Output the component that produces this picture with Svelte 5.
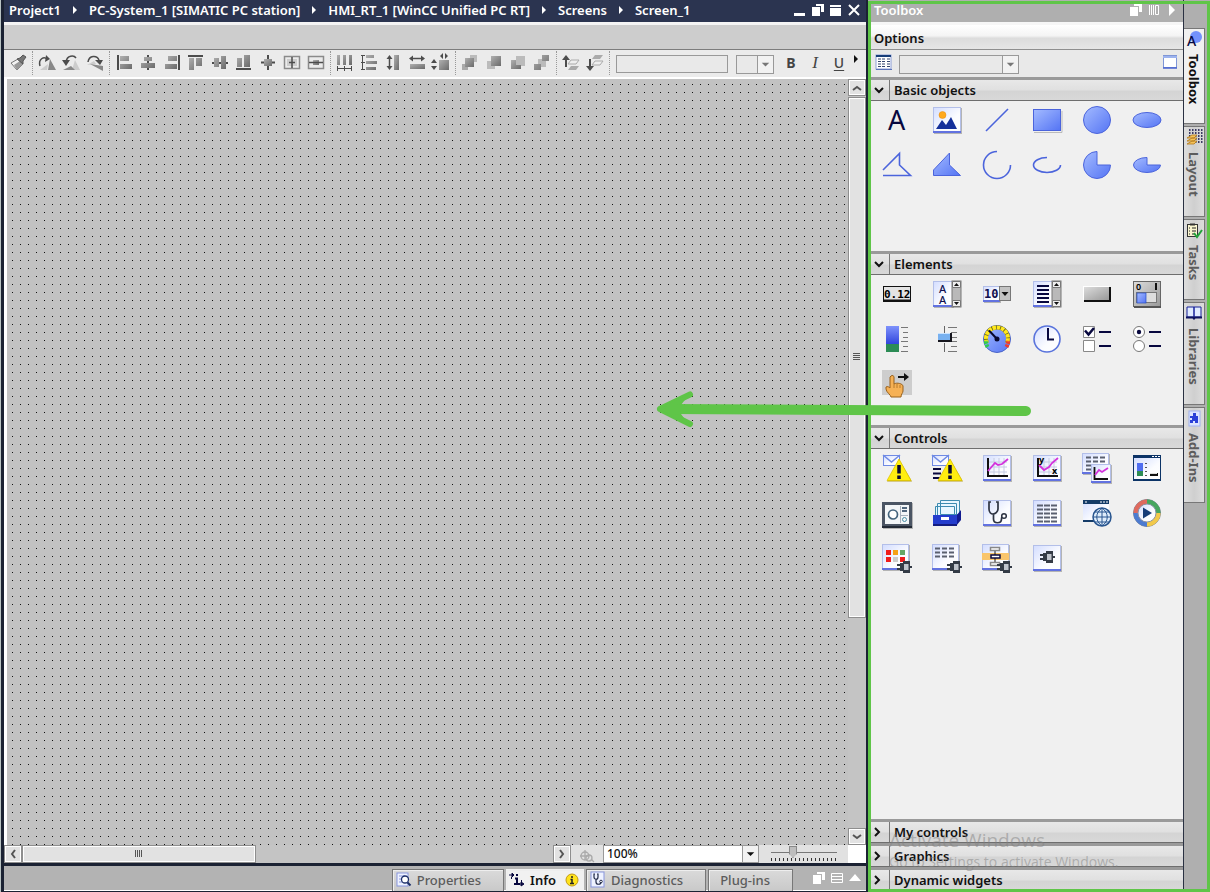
<script>
  const sheet = (x, y, w, h) =>
    `<rect x="${x + 1}" y="${y + 1}" width="${w}" height="${h}" fill="#b4b4b4"/><rect x="${x + 0.5}" y="${y + 0.5}" width="${w - 1}" height="${h - 1}" fill="url(#paper)" stroke="#b3bfe9"/><rect x="${x}" y="${y + h - 2}" width="${w}" height="2" fill="#6272e0"/>`;
  const plug = (x, y) =>
    `<g transform="translate(${x} ${y})"><path d="M0 4h4M0 8h4M12 6h3" stroke="#343b46" stroke-width="2"/><path d="M3 2h3V0h7v12H6v-2H3z" fill="#343b46"/><rect x="7" y="3" width="4.500" height="6" fill="#bfc4cc"/></g>`;
  const grid = (x, y) =>
    `<path d="M${x} ${y}h18M${x} ${y + 5}h18M${x} ${y + 10}h18M${x + 5} ${y - 4}v18M${x + 10} ${y - 4}v18M${x + 15} ${y - 4}v18" stroke="#c5cbe2" fill="none"/>`;
  const dashes = (x, y, rows, w = 5, step = 7) => {
    let d = '';
    for (let r = 0; r < rows; r++) for (let c = 0; c < 3; c++) d += `M${x + c * step} ${y + r * 4 + 0.5}h${w}`;
    return `<path d="${d}" stroke="#5a6070" stroke-width="2" fill="none"/>`;
  };
  const spin = `<rect x="20" y="2" width="9" height="26" fill="#b9b9b9" stroke="#777" stroke-width="1"/><path d="M20.500 2.500h8v6h-8zM20.500 21.500h8v6h-8z" fill="#eee" stroke="#777"/><path d="M22 7h5l-2.500-3zM22 23h5l-2.500 3z" fill="#111"/>`;
  const warn = (x) => `<path d="M${x} 6L${x + 13} 28.500H${x - 12}z" fill="#b8a020"/><path d="M${x} 6L${x + 12} 27.500H${x - 12}z" fill="#ffee10" stroke="#e0c400" stroke-width=".7"/><path d="M${x} 12v8.500M${x} 22.500v3.500" stroke="#0a0a30" stroke-width="3.500"/>`;
  const mail = (x) => `<rect x="${x + 0.5}" y="2.500" width="16" height="10" fill="url(#paper)" stroke="#6f8ae4"/><path d="M${x} 2l8.500 7 8.500-7" fill="none" stroke="#6f8ae4" stroke-width="1.500"/>`;
  const blueLine = 'fill="none" stroke="#4b64dc" stroke-width="1.600"';
  const blueFill = 'fill="url(#blue)" stroke="#4b64dc"';

  const basic = [
    ['Text', `<text x="6" y="25" font-family="Noto Sans, sans-serif" font-size="27" font-weight="400" fill="#08083f">A</text>`],
    ['Graphic view', `${sheet(1, 2, 28, 26)}<circle cx="10.500" cy="10" r="3.500" fill="#ffa91e" stroke="#e88b08" stroke-width=".5"/><path d="M4 24l6-9 4 5 5-8 6 12z" fill="#15309a"/>`],
    ['Line', `<path d="M4 26L26 4" ${blueLine}/>`],
    ['Rectangle', `<path d="M2 27.500h28V6" stroke="#bbb" fill="none"/><rect x="1.500" y="4.500" width="27" height="21" ${blueFill}/>`],
    ['Circle', `<circle cx="15" cy="15" r="13.500" ${blueFill}/>`],
    ['Ellipse', `<ellipse cx="15" cy="15" rx="14" ry="7.500" ${blueFill}/>`],
    ['Polyline', `<path d="M1 20L17.500 3.500V15L28.500 25.500H1" ${blueLine}/>`],
    ['Polygon', `<path d="M1.500 20L17.500 3V15L28.500 25.500H1.500z" ${blueFill}/>`],
    ['Circular arc', `<path d="M15 1.500A13.500 13.500 0 1 0 28.500 15" ${blueLine}/>`],
    ['Elliptical arc', `<path d="M15 7.500A13.500 7.500 0 1 0 28.500 15" ${blueLine}/>`],
    ['Circle segment', `<path d="M15 1.500A13.500 13.500 0 1 0 28.500 15H15z" ${blueFill}/>`],
    ['Ellipse segment', `<path d="M15 7.500A13.500 7.500 0 1 0 28.500 15H15z" ${blueFill}/>`]
  ];

  const yellowTicks = 'M5 19A11 11 0 1 1 25 19';
  const elements = [
    ['IO field', `<rect x="1" y="7" width="28" height="16" fill="#111"/><rect x="2" y="8" width="26" height="12.500" fill="#e3e3e3"/><text x="2" y="18.500" font-family="DejaVu Sans Mono, monospace" font-weight="700" font-size="11">0.12</text>`],
    ['Symbolic list', `${sheet(1, 2, 20, 26)}<g font-family="Noto Sans, sans-serif" font-size="11" font-weight="500" fill="#101050"><text x="7" y="14">A</text><text x="7" y="25">A</text></g>${spin}`],
    ['Symbolic IO field', `${sheet(1, 7, 17, 16)}<text x="2" y="19" font-family="DejaVu Sans Mono, monospace" font-weight="700" font-size="12" fill="#101050">10</text><rect x="17.500" y="7.500" width="11" height="14" fill="#c3c3c3" stroke="#777"/><path d="M19.500 13h7L23 17z" fill="#111"/>`],
    ['List box', `${sheet(1, 2, 20, 26)}<path d="M5 7h12M5 11h12M5 15h12M5 19h12M5 23h12" stroke="#08083f" stroke-width="2"/>${spin}`],
    ['Button', `<rect x="2" y="8" width="27" height="15" fill="#111"/><rect x="1" y="7" width="26" height="14" fill="#fff"/><rect x="2" y="8" width="25" height="13" fill="url(#steel)"/>`],
    ['Switch', `<rect x="1.500" y="2.500" width="27" height="25" fill="url(#steel)" stroke="#666"/><path d="M2 28h27" stroke="#555" stroke-width="2"/><text x="4" y="11" font-family="Noto Sans, sans-serif" font-size="9" font-weight="600">0</text><path d="M24 4v7" stroke="#111" stroke-width="2"/><rect x="4.500" y="13.500" width="20" height="10" fill="#ddd" stroke="#777"/><rect x="5" y="14" width="9" height="10" fill="url(#blue)" stroke="#234bc0" stroke-width=".7"/>`],
    ['Bar', `<rect x="4" y="2" width="13" height="18" fill="url(#deep)"/><rect x="4" y="20" width="13" height="8" fill="#2c8c55"/><path d="M19 3.500h7M21 8.500h5M21 13.500h5M19 17.500h7M21 22.500h5M19 27.500h7" stroke="#777"/>`],
    ['Slider', `<path d="M12.500 2v11M12.500 19v9" stroke="#666"/><path d="M16 3.500h9M19 8.500h6M19 13.500h6M16 17.500h9M19 22.500h6M16 27.500h9" stroke="#777"/><rect x="6" y="9" width="14" height="9" fill="#16161e"/><rect x="6" y="9" width="12" height="7" fill="#78b1f0"/><path d="M6 9.500h12" stroke="#cbe4ff"/>`],
    ['Gauge', `<circle cx="15" cy="15" r="13.500" fill="url(#blue)" stroke="#4a64c8"/><path d="${yellowTicks}" fill="none" stroke="#66621c" stroke-width="4"/><path d="${yellowTicks}" fill="none" stroke="#ffe81c" stroke-width="4" stroke-dasharray="3.500 .8"/><path d="M5.500 23A12 12 0 0 1 4 16" fill="none" stroke="#2ecc50" stroke-width="4" stroke-dasharray="2.500 1"/><path d="M24.500 23A12 12 0 0 0 26 16" fill="none" stroke="#f03a2c" stroke-width="4" stroke-dasharray="2.500 1"/><path d="M7 6.500L15 15" stroke="#080830" stroke-width="2"/><circle cx="15" cy="15" r="2.500" fill="#080830"/>`],
    ['Clock', `<circle cx="15" cy="15" r="13" fill="url(#paper)" stroke="#5a74dc" stroke-width="1.600"/><path d="M16 4v11.500h6" fill="none" stroke="#08083f" stroke-width="2"/>`],
    ['Check box', `<path d="M1.500 2.500h11v11h-11zM1.500 16.500h11v11h-11z" fill="#fff" stroke="#888"/><path d="M3 6.500l3.500 4L12 4" fill="none" stroke="#08083f" stroke-width="2.500"/><path d="M17 8h12M17 22h12" stroke="#08083f" stroke-width="2"/>`],
    ['Radio button', `<g fill="#fff" stroke="#777"><circle cx="7" cy="8" r="5.500"/><circle cx="7" cy="22" r="5.500"/></g><circle cx="7" cy="8" r="2.200" fill="#08083f"/><path d="M17 8h12M17 22h12" stroke="#08083f" stroke-width="2"/>`],
    ['Touch area', `<path d="M0 1h30v25H0z" fill="#cdcdcd"/><path d="M9 7c1.500-1.300 3 0 3 1v7c3-2 9 0 9 2v5c0 2-2 3-2 6H9c0-2-5-5-5-8v-2c1.500-1 3 0 4 1V8z" fill="#f6b155" stroke="#99611c"/><path d="M12 15v4M15 15v4M18 16v3" stroke="#b77a2c" fill="none"/><path d="M16 8h8" stroke="#111" stroke-width="2"/><path d="M22 4l5 4-5 4z" fill="#111"/>`]
  ];

  const controls = [
    ['Alarm control', `${mail(1)}${warn(17)}`],
    ['Alarm line', `${mail(0)}<path d="M1 16h8M1 20.500h8M1 25h8" stroke="#08083f" stroke-width="2"/>${warn(18)}`],
    ['Trend control', `${sheet(1, 2, 28, 26)}${grid(7, 9)}<path d="M6 5v18H26" fill="none" stroke="#111" stroke-width="2"/><path d="M6 18l7-8 3 2 4-1 6-5" fill="none" stroke="#d432dc" stroke-width="1.800"/>`],
    ['Function trend', `${sheet(1, 2, 28, 26)}${grid(7, 9)}<path d="M6 5v18H26" fill="none" stroke="#111" stroke-width="2"/><path d="M7 12l5 5 5-3 3-4 6-5" fill="none" stroke="#d432dc" stroke-width="1.800"/><g font-family="Noto Sans, sans-serif" font-size="9" font-weight="700"><text x="7" y="10">y</text><text x="20" y="21">x</text></g>`],
    ['Trend companion', `${sheet(0, 0, 27, 21)}${dashes(4, 4, 4)}${sheet(9, 11, 20, 19)}<path d="M12.500 14v12H26" fill="none" stroke="#111" stroke-width="1.800"/><path d="M13 22l4-5 3 2 6-4" fill="none" stroke="#d432dc" stroke-width="1.800"/>`],
    ['Faceplate', `<rect x="1" y="2" width="28" height="26" fill="#0c3366"/><rect x="2" y="5" width="26" height="21" fill="url(#paper)"/><path d="M20 3.500h2M23 3.500h2M26 3.500h2" stroke="#fff"/><rect x="5" y="10" width="6" height="8" fill="#4f6df0"/><rect x="5" y="18" width="6" height="5" fill="#2c8c55"/><path d="M13 10.500h2M13 14.500h2M13 18.500h2M13 22.500h2" stroke="#555"/><rect x="18" y="20" width="8" height="3" fill="#111"/><path d="M18 20.500h7" stroke="#ddd"/>`],
    ['Screen window', `<rect x="1" y="5" width="30" height="26" fill="#b5b5b5"/><rect x="0" y="4" width="30" height="26" fill="#4b5564"/><path d="M0 29h30" stroke="#222a36" stroke-width="2"/><rect x="3" y="7" width="24" height="19" fill="#f3f6f8"/><circle cx="11" cy="16.500" r="4.500" fill="#fff" stroke="#44647d" stroke-width="1.700"/><path d="M18.500 8v17M19 17.500h7" stroke="#a7b0bb"/><path d="M20 10h5M20 13h5" stroke="#1c3956" stroke-width="1.500"/><circle cx="22.500" cy="21.500" r="2" fill="none" stroke="#4a8ea5"/>`],
    ['Parameter set', `<g fill="#e7f7ff" stroke="#3c8bb0"><path d="M8.500 2.500h19v14h-19zM5.500 5.500h19v14h-19zM3.500 8.500h19v14h-19z"/></g><path d="M24 18l5-6v10l-5 6z" fill="#111b8f"/><rect x="1" y="17" width="24" height="11" fill="#243dcd"/><path d="M1 27h24" stroke="#131c80" stroke-width="2"/><path d="M9 20.500h8" stroke="#fff" stroke-width="3"/>`],
    ['System diagnostics', `${sheet(1, 2, 28, 26)}<path d="M9 4H7v7c0 3 2 5 4 5s5-2 5-5V4h-2M11.500 16v5c0 5 8 5 8 0 0-2 1-3 2-3" fill="none" stroke="#2e3443" stroke-width="1.700"/><circle cx="22" cy="18" r="2.300" fill="#fff" stroke="#2e3443" stroke-width="1.500"/>`],
    ['Process data', `${sheet(1, 2, 28, 26)}${dashes(5, 7, 5, 6, 7)}`],
    ['Browser', `<rect x="1" y="2" width="26" height="22" fill="url(#paper)"/><rect x="1" y="2" width="26" height="4" fill="#143b67"/><path d="M3 4h2M18 4h2M21 4h2M24 4h2" stroke="#fff"/><path d="M1 23h14" stroke="#143b67" stroke-width="2"/><circle cx="20" cy="19" r="9" fill="#dfedfb" stroke="#28558f" stroke-width="1.500"/><path d="M11 19h18M13 14h14M13 24h14M20 10v18M20 10c-7 5-7 13 0 18M20 10c7 5 7 13 0 18" fill="none" stroke="#28558f"/>`],
    ['Media player', `<circle cx="15" cy="15" r="13.500" fill="#b9bfca" stroke="#7a8292"/><g fill="none" stroke-width="5"><path d="M4 15A11 11 0 0 1 15 4" stroke="#df6a5e"/><path d="M15 4A11 11 0 0 1 26 15" stroke="#46a75e"/><path d="M26 15A11 11 0 0 1 15 26" stroke="#f2c94a"/><path d="M15 26A11 11 0 0 1 4 15" stroke="#4c7bd0"/></g><circle cx="15" cy="15" r="9" fill="url(#paper)" stroke="#8b93a6"/><path d="M11 9.500l9 5.500-9 5.500z" fill="#173d78"/>`],
    ['Custom tiles', `${sheet(0, 1, 27, 26)}<path d="M4 7h5v5H4zM18 14h5v5h-5zM4 14h5v5H4z" fill="#f01c1c"/><path d="M11 7h5v5h-5z" fill="#f5a117"/><path d="M18 7h5v5h-5z" fill="#66a766"/><path d="M11 14h5v5h-5z" fill="#ccc"/>${plug(15, 18)}`],
    ['Custom table', `${sheet(0, 1, 27, 26)}${dashes(3, 5, 3)}${plug(15, 18)}`],
    ['Plant overview', `${sheet(0, 1, 27, 26)}<rect x="0" y="10" width="27" height="7" fill="#f9c56c"/><path d="M13 7v14" stroke="#111"/><path d="M8.500 4.500h9v3h-9zM8.500 19.500h9v3h-9z" fill="#fff" stroke="#888" stroke-width="1.500"/><rect x="9" y="12" width="9" height="3" fill="#fff" stroke="#08083f" stroke-width="1.500"/>${plug(15, 18)}`],
    ['Custom web control', `${sheet(1, 2, 28, 26)}${plug(8, 8)}`]
  ];

  let sections = $state([
    { title: 'Basic objects', items: basic, open: true },
    { title: 'Elements', items: elements, open: true },
    { title: 'Controls', items: controls, open: true, fill: true },
    { title: 'My controls', items: [], open: false },
    { title: 'Graphics', items: [], open: false },
    { title: 'Dynamic widgets', items: [], open: false }
  ]);

  const g = 'fill="url(#tool)"';
  const k = 'fill="#4c4c4c"';
  const s = 'fill="none" stroke="#4c4c4c"';
  const tools = [
    [['Format painter', `<path d="M5 12l7-4 5 5-6 6z" fill="#f3f3f3" stroke="#777"/><path d="M8 14l6-4 3 3-6 6z" fill="#999"/><path d="M11 8l3-1 3-3 3 2-3 4v3z" fill="#777" stroke="#555"/>`]],
    [
      ['Rotate right', `<path d="M13 19h8L15 8z" fill="#888"/><path d="M12 19H5l8-6z" fill="#ccc"/><path d="M5 15C3 8 9 5 12 8" ${s} stroke-width="1.500"/><path d="M11 4l4 4-5 3z" ${k}/>`],
      ['Rotate left', `<path d="M13 19h8l-5-10z" fill="#ccc"/><path d="M4 19h12l-4-4z" fill="#888"/><path d="M17 7C15 4 8 4 7 11" ${s} stroke-width="1.500"/><path d="M3 9h8l-4 6z" ${k}/>`],
      ['Flip', `<path d="M4 14l7-4 2 3z" fill="#ccc"/><path d="M7 13l13 2v5z" fill="#888"/><path d="M5 11C6 4 14 4 16 9" ${s} stroke-width="1.500"/><path d="M12 9h8l-3 5z" ${k}/>`]
    ],
    [
      ['Align left', `<path d="M5 4h2v15H5z" ${k}/><path d="M8 5h9v5H8zM8 13h12v5H8z" ${g}/>`],
      ['Align center', `<path d="M11 4h2v15h-2z" ${k}/><path d="M8 6h8v4H8zM5 12h14v5H5z" ${g}/>`],
      ['Align right', `<path d="M18 4h2v15h-2z" ${k}/><path d="M8 5h9v5H8zM5 13h12v5H5z" ${g}/>`],
      ['Align top', `<path d="M4 4h15v2H4z" ${k}/><path d="M5 7h5v12H5zM12 7h6v8h-6z" ${g}/>`],
      ['Align middle', `<path d="M4 11h16v2H4z" ${k}/><path d="M6 7h5v9H6zM13 5h5v13h-5z" ${g}/>`],
      ['Align bottom', `<path d="M4 17h15v2H4z" ${k}/><path d="M5 7h5v9H5zM12 4h6v12h-6z" ${g}/>`],
      ['Centre on screen', `<path d="M12 4v15M5 11.500h14" ${s} stroke-width="2"/><path d="M8 8h8v7H8z" ${g}/>`],
      ['Centre horizontally', `<path d="M4.500 5.500h15v12h-15z" fill="none" stroke="#8a8a8a" stroke-width="1.500"/><path d="M7 8h10v7H7z" fill="#ccc"/><path d="M12 6v11M9 11.500h6" ${s} stroke-width="1.500"/>`],
      ['Centre vertically', `<path d="M4.500 5.500h15v12h-15z" fill="none" stroke="#8a8a8a" stroke-width="1.500"/><path d="M9 9h6v5H9z" ${g}/><path d="M5 11.500h14" ${s} stroke-width="1.500"/>`]
    ],
    [
      ['Distribute horizontally', `<path d="M4 4h3v10H4zM10 4h3v10h-3zM16 4h3v10h-3z" ${g}/><path d="M4 17.500h15M4.500 15v5M11.500 15v5M18.500 15v5" ${s}/>`],
      ['Distribute vertically', `<path d="M9 4h8v3H9zM9 10h11v3H9zM9 16h10v3H9z" ${g}/><path d="M5.500 4v15M4 4.500h4M4 11.500h4M4 18.500h4" ${s}/>`],
      ['Same height', `<path d="M13 4h5v15h-5z" ${g}/><path d="M8.500 7v9" ${s} stroke-width="1.500"/><path d="M8.500 4l3 4h-6zM8.500 19l3-4h-6z" ${k}/>`],
      ['Same width', `<path d="M5 13h15v5H5z" ${g}/><path d="M7 7.500h10" ${s} stroke-width="1.500"/><path d="M4 7.500l4-3v6zM20 7.500l-4-3v6z" ${k}/>`],
      ['Same size', `<path d="M10 9h10v10H10z" ${g}/><path d="M2 12h6l-3-4zM2 15h6l-3 4zM11 5l3-3v6zM19 5l-3-3v6z" ${k}/>`]
    ],
    [
      ['Bring to front', `<path d="M12 4h7v7h-7z" fill="#bbb"/><path d="M4 13h6v6H4z" fill="#aaa"/><path d="M7 7h9v9H7z" ${g}/>`],
      ['Bring forward', `<path d="M5 10h8v8H5z" fill="#bbb"/><path d="M9 5h10v10H9z" ${g}/>`],
      ['Send backward', `<path d="M10 5h9v10h-9z" fill="#bbb"/><path d="M5 9h5v5h5v4H5z" ${g}/>`],
      ['Send to back', `<path d="M8 8h8v8H8z" fill="#bbb"/><path d="M12 4h7v6h-7zM4 13h7v6H4z" ${g}/>`]
    ],
    [
      ['Move up', `<path d="M7 16V7" ${s} stroke-width="2"/><path d="M3 9l4-5 4 5z" ${k}/><path d="M12 9h8l-3 4H9z" fill="#eee" stroke="#aaa"/><path d="M12 15h8l-3 4H9z" fill="#aaa"/>`],
      ['Move down', `<path d="M7 8v9" ${s} stroke-width="2"/><path d="M3 15l4 5 4-5z" ${k}/><path d="M12 4h8l-3 4H9z" fill="#aaa"/><path d="M12 10h8l-3 4H9z" fill="#eee" stroke="#aaa"/>`]
    ]
  ];

  const win = `<rect x="4" y="0" width="8" height="8" fill="#fff"/><rect x="0" y="2" width="9" height="10" fill="var(--bg)"/><rect x="4" y="0" width="8" height="2" fill="#fff"/><rect x="0" y="3" width="8" height="9" fill="#fff"/>`;
  const path = ['Project1', 'PC-System_1 [SIMATIC PC station]', 'HMI_RT_1 [WinCC Unified PC RT]', 'Screens', 'Screen_1'];

  const sideTabs = [
    ['Toolbox', `<circle cx="10" cy="6" r="6" fill="#7391fb"/><text x="1" y="15" font-family="Noto Sans, sans-serif" font-size="14" font-weight="500" fill="#08083f">A</text>`],
    ['Layout', `<path d="M3 1h14M3 4h14M3 7h14M9 10h8M9 13h8" stroke="#08083f" stroke-width="1.500" stroke-dasharray="1.500 1.500"/><path d="M1 9l5-3h5l-3 3zM1 12l5-3h5l-3 3zM1 15l5-3h5l-3 3z" fill="#f4c25b" stroke="#b37a19" stroke-width=".8"/>`],
    ['Tasks', `<rect x="1.500" y="2.500" width="10" height="12" fill="#f9f5cf" stroke="#333"/><path d="M4 2.500h5" stroke="#333" stroke-width="2"/><path d="M3 6h1M6 6h4M3 9h1M6 9h4M3 12h1M6 12h3" stroke="#222"/><path d="M8 11l3 4 5-7" fill="none" stroke="#22a33a" stroke-width="2"/>`],
    ['Libraries', `<path d="M1 2h7v10H1zM8 2h7v10H8z" fill="#dfeaff" stroke="#16209a"/><path d="M0 12.500h7l1 1 1-1h7" fill="none" stroke="#0b105e" stroke-width="2"/>`],
    ['Add-Ins', `<rect x="3" y="1" width="11" height="15" fill="#dce4ff" stroke="#9fb1f0"/><path d="M7 3h3v3h2v7H9v-2H7v2H4v-3h2V8H4V6h3z" fill="#2a40d8"/>`]
  ];
  const paneTabs = [
    ['Properties', `<rect x="1" y="1" width="11" height="13" fill="#eef2ff" stroke="#8795dd"/><path d="M3 4h6M3 7h3M3 10h3" stroke="#8795dd"/><circle cx="9" cy="7.500" r="3.500" fill="#fff" stroke="#1c2f69" stroke-width="1.300"/><path d="M11.500 10.500l3 3" stroke="#1c2f69" stroke-width="2"/>`],
    ['Info', `<path d="M0 3h3M3 1l2 2-2 2zM9 12h4M12 10l3 2-3 2z" stroke="#08083f" fill="#08083f"/><path d="M2.500 5v2M12.500 8v3" fill="none" stroke="#08083f"/><path d="M8 2v2M6 6.500h2V12M5 12h6" fill="none" stroke="#08083f" stroke-width="2"/>`],
    ['Diagnostics', `<rect x="1" y="0" width="13" height="15" fill="#eef2ff" stroke="#8795dd"/><path d="M5 2H4v3c0 3 4 3 4 0V2H7M6 7v3c0 3 5 3 5 0" fill="none" stroke="#222a48" stroke-width="1.200"/><circle cx="11" cy="9.500" r="1.300" fill="#fff" stroke="#222a48"/>`],
    ['Plug-ins', '']
  ];
  let activePane = $state('Info');
  let activeSide = $state('Toolbox');
  let zoom = $state(31);
</script>

<svg class="defs" width="0" height="0" aria-hidden="true">
  <defs>
    <linearGradient id="blue" x1="0" y1="0" x2="1" y2="1"><stop stop-color="#a4bbff" /><stop offset="1" stop-color="#5474f4" /></linearGradient>
    <linearGradient id="deep" x1="0" y1="0" x2="0" y2="1"><stop stop-color="#7e92fb" /><stop offset="1" stop-color="#3145dd" /></linearGradient>
    <linearGradient id="paper" x1="0" y1="0" x2="1" y2="1"><stop stop-color="#d3ddff" /><stop offset=".6" stop-color="#fbfcff" /><stop offset="1" stop-color="#fff" /></linearGradient>
    <linearGradient id="steel" x1="0" y1="0" x2="1" y2="1"><stop stop-color="#dcdcdc" /><stop offset="1" stop-color="#999" /></linearGradient>
    <linearGradient id="tool" x1="0" y1="0" x2="1" y2="1"><stop stop-color="#b0b0b0" /><stop offset="1" stop-color="#6a6a6a" /></linearGradient>
  </defs>
</svg>

<div class="page">
  <main class="editor">
    <header class="titlebar">
      <nav aria-label="Path">
        {#each path as part, i}
          {#if i}<svg width="28" height="12" viewBox="0 0 28 12"><path d="M12 2l4 4-4 4z" fill="#fff" /></svg>{/if}
          <span>{part}</span>
        {/each}
      </nav>
      <div class="winbtns">
        <button aria-label="Minimize"><svg width="12" height="12"><path d="M0 9h11v3H0z" fill="#fff" /></svg></button>
        <button aria-label="Restore"><svg width="12" height="12">{@html win}</svg></button>
        <button aria-label="Maximize"><svg width="12" height="12"><path d="M0 1h11v2H0zM0 4h11v8H0z" fill="#fff" /></svg></button>
        <button aria-label="Close"><svg width="12" height="12"><path d="M1 1l10 10M11 1L1 11" stroke="#fff" stroke-width="2" /></svg></button>
      </div>
    </header>
    <div class="spacer"></div>
    <div class="toolbar" role="toolbar" aria-label="Editing">
      {#each tools as group}
        <div class="group">
          {#each group as [name, art]}
            <button aria-label={name}><svg width="24" height="24">{@html art}</svg></button>
          {/each}
        </div>
      {/each}
      <input class="fontname" aria-label="Font" />
      <div class="combo size">
        <select aria-label="Font size"><option></option></select>
        <svg width="16" height="16" viewBox="0 0 16 16"><path d="M4 6h8l-4 4z" fill="#777" /></svg>
      </div>
      <div class="marks">
        <button class="bold">B</button>
        <button class="italic">I</button>
        <button class="under">U</button>
      </div>
      <button class="more" aria-label="More"><svg width="6" height="8"><path d="M1 0l4 4-4 4z" fill="#111" /></svg></button>
    </div>

    <div class="work">
      <div class="canvas"></div>
      <div class="vscroll">
        <button aria-label="Scroll up"><svg width="12" height="8"><path d="M2 6l4-3 4 3" fill="none" stroke="#555" stroke-width="2" /></svg></button>
        <div class="thumb"><svg width="8" height="8"><path d="M0 .5h7M0 2.500h7M0 4.500h7M0 6.500h7" stroke="#555" /></svg></div>
        <div class="rest"></div>
        <button aria-label="Scroll down"><svg width="12" height="8"><path d="M2 2l4 3 4-3" fill="none" stroke="#555" stroke-width="2" /></svg></button>
      </div>
    </div>
    <div class="hrow">
      <div class="hscroll">
        <button aria-label="Scroll left"><svg width="8" height="12"><path d="M6 2L3 6l3 4" fill="none" stroke="#555" stroke-width="2" /></svg></button>
        <div class="thumb"><svg width="8" height="8"><path d="M.5 0v7M2.500 0v7M4.500 0v7M6.500 0v7" stroke="#555" /></svg></div>
        <div class="rest"></div>
        <button aria-label="Scroll right"><svg width="8" height="12"><path d="M2 2l3 4-3 4" fill="none" stroke="#555" stroke-width="2" /></svg></button>
      </div>
      <button class="zoomfit" aria-label="Zoom selection"><svg width="16" height="16"><g fill="none" stroke="#aaa" stroke-width="1.300"><circle cx="6" cy="10" r="4" /><path d="M6 4v10M1 10h9M12 13l3 3" /><circle cx="10" cy="12" r="3" /></g></svg></button>
      <div class="combo zoom">
        <select aria-label="Zoom"><option>100%</option></select>
        <svg width="16" height="16" viewBox="0 0 16 16"><path d="M4 6h8l-4 4z" fill="#111" /></svg>
      </div>
      <div class="slider"><input type="range" aria-label="Zoom level" bind:value={zoom} /><div class="ticks"></div></div>
      <div class="corner"></div>
    </div>

    <footer class="panes">
      <div class="panetabs" role="tablist">
        {#each paneTabs as [name, art]}
          <button role="tab" aria-selected={activePane === name} class:active={activePane === name} onclick={() => (activePane = name)}>
            {#if art}<svg width="16" height="16">{@html art}</svg>{/if}
            <span class="label">{name}</span>
            {#if name === 'Info'}<svg width="14" height="14"><circle cx="7" cy="7" r="6" fill="#ffe31c" stroke="#c39a10" /><path d="M7 3v2M5.500 6.500H7V10M5 10.500h4" fill="none" stroke="#222" stroke-width="1.500" /></svg>{/if}
          </button>
        {/each}
      </div>
      <div class="panebtns">
        <button aria-label="Float pane"><svg width="12" height="12">{@html win}</svg></button>
        <button aria-label="Arrange pane"><svg width="12" height="12"><path d="M.5 1.500h11v9H.5zM0 4.500h12M0 7.500h12" fill="none" stroke="#fff" /></svg></button>
        <button aria-label="Expand pane"><svg width="12" height="12"><path d="M0 9l6-7 6 7z" fill="#fff" /></svg></button>
      </div>
    </footer>
  </main>

  <aside class="side">
    <div class="toolbox">
      <header class="tooltitle">
        <h1>Toolbox</h1>
        <div class="toolbtns">
          <button aria-label="Float"><svg width="12" height="12">{@html win}</svg></button>
          <button aria-label="Dock"><svg width="12" height="12"><path d="M1.500 1v10M3.500 1v10M5.500 1v10M7.500 1.500h3v9h-3z" fill="none" stroke="#fff" /></svg></button>
          <button aria-label="Collapse"><svg width="12" height="12"><path d="M3 0l6 6-6 6z" fill="#fff" /></svg></button>
        </div>
      </header>
      <h2 class="options">Options</h2>
      <div class="optbar">
        <button aria-label="List view"><svg width="16" height="16"><rect x="0" y="0" width="15" height="14" fill="#fff" stroke="#8ea0d8" /><path d="M0 1h15" stroke="#173d78" stroke-width="2" /><path d="M2 4h3M6 4h3M11 4h3M2 6.500h3M6 6.500h3M11 6.500h3M2 9h3M6 9h3M11 9h3M2 11.500h3M6 11.500h3M11 11.500h3" stroke="#34456f" /><path d="M0 14.500h16" stroke="#5a72b8" stroke-width="1" /></svg></button>
        <div class="combo filter">
          <select aria-label="Filter"><option></option></select>
          <svg width="16" height="16" viewBox="0 0 16 16"><path d="M4 6h8l-4 4z" fill="#777" /></svg>
        </div>
        <button class="preview" aria-label="Preview"><svg width="16" height="16"><rect x="1.500" y=".5" width="13" height="12" fill="#fff" stroke="#7f96d6" /><path d="M1 2h14" stroke="#9db3ee" stroke-width="2" /><path d="M1 13h14" stroke="#4a63cf" stroke-width="1.500" /></svg></button>
      </div>
      {#each sections as sec}
        <section class:fill={sec.fill}>
          <button class="sechead" aria-expanded={sec.open} onclick={() => (sec.open = !sec.open)}>
            <span class="chev"><svg width="12" height="12"><path d={sec.open ? 'M2 4l4 4 4-4' : 'M2 2l4 4-4 4'} fill="none" stroke="#111" stroke-width="2" /></svg></span>
            <span class="sectitle">{sec.title}</span>
          </button>
          {#if sec.open}
            <div class="tiles">
              {#each sec.items as [name, art]}
                <button aria-label={name}><svg width="30" height="30">{@html art}</svg></button>
              {/each}
            </div>
          {/if}
        </section>
      {/each}
      <p class="activate"><span class="big">Activate Windows</span><span>Go to Settings to activate Windows.</span></p>
    </div>
    <div class="sidetabs" role="tablist" aria-orientation="vertical">
      {#each sideTabs as [name, art]}
        <button role="tab" aria-selected={activeSide === name} class:active={activeSide === name} onclick={() => (activeSide = name)}>
          <svg width="17" height="17">{@html art}</svg>
          <span>{name}</span>
        </button>
      {/each}
    </div>
    <div class="frame"></div>
    <svg class="arrow" width="380" height="44" viewBox="0 0 380 44"><path d="M8 21L38 6.500M8 21L38 36" stroke="#5fc548" stroke-width="6" stroke-linecap="round" /><path d="M7 21L38 5l-9 12v9l9 12z" fill="#5fc548" /><path d="M18 21L374 23" stroke="#5fc548" stroke-width="10" stroke-linecap="round" /></svg>
  </aside>
</div>

<style>
  :global(body) { margin: 0; overflow: hidden; }
  .page, .page * { box-sizing: border-box; }
  .page {
    display: grid;
    grid-template-columns: minmax(0, 1fr) 342px;
    height: 100vh;
    font: 500 13px/20px "Noto Sans", sans-serif;
    color: #111;
    background: #1b2233;
  }
  .defs { position: absolute; }
  svg { display: block; flex: none; overflow: visible; }
  button { border: 0; padding: 0; margin: 0; background: none; font: inherit; color: inherit; }
  h1, h2, p { margin: 0; font: inherit; }

  .editor {
    display: flex;
    flex-direction: column;
    min-width: 0;
    margin-right: 2px;
    border-left: 1px solid #b9c3c3;
    box-shadow: inset 3px 0 #1b2233;
    padding: 0 0 0 3px;
  }
  .titlebar {
    --bg: #2b3450;
    display: flex;
    justify-content: space-between;
    height: 22px;
    padding: 0 6px 0 5px;
    background: #2b3450;
    color: #fff;
  }
  nav { display: flex; align-items: center; padding-bottom: 2px; white-space: nowrap; font-weight: 600; }
  .winbtns, .toolbtns, .panebtns { display: flex; align-items: center; gap: 6px; }
  .winbtns { padding-bottom: 2px; }
  .spacer {
    height: 28px;
    border-top: 3px solid #f4f4f4;
    border-bottom: 1px solid #7c7c7c;
    background: #cdcdcd;
  }
  .toolbar {
    display: flex;
    height: 29px;
    padding: 1px 2px 0;
    background: #ebebeb;
    border-bottom: 2px solid #fff;
    overflow: hidden;
  }
  .group { display: flex; flex: none; padding-right: 2px; margin-right: 2px; border-right: 1px dotted #999; height: 24px; }
  .fontname {
    width: 112px;
    height: 18px;
    margin: 4px 8px 0 4px;
    padding: 0 4px;
    border: 1px solid #999;
    background: #e9e9e9;
    border-radius: 0;
  }
  .combo { display: grid; grid-template-columns: 1fr 16px; align-items: center; border: 1px solid #999; background: #e9e9e9; }
  .combo select {
    grid-area: 1 / 1 / 2 / 3;
    appearance: none;
    width: 100%;
    height: 100%;
    border: 0;
    padding: 0 18px 0 3px;
    background: none;
    font: 500 12px/14px "Noto Sans", sans-serif;
    color: #111;
  }
  .combo svg { grid-area: 1 / 2; height: 100%; border-left: 1px solid #999; background: #f2f2f2; pointer-events: none; }
  .size { width: 38px; height: 19px; margin-top: 4px; }
  .marks { display: flex; margin-left: 5px; }
  .marks button { width: 24px; height: 24px; font-size: 14px; line-height: 20px; color: #444; }
  .marks .bold { font-weight: 700; }
  .marks .italic { font: italic 17px/20px "Liberation Serif", serif; }
  .marks .under { text-decoration: underline; text-underline-offset: 2px; }
  .more { height: 16px; margin-left: 2px; }

  .work { display: flex; flex: 1; min-height: 0; }
  .canvas {
    flex: 1;
    margin-left: 3px;
    box-shadow: -3px 0 #fff;
    background-color: #c2c2c2;
    background-image: conic-gradient(from 270deg at 1px 1px, #111 90deg, transparent 0);
    background-size: 8px 8px;
    background-position: 5px 5px;
  }
  .vscroll { display: flex; flex-direction: column; width: 18px; background: #c4c4c4; }
  .vscroll button, .hscroll button, .thumb {
    display: grid;
    place-items: center;
    border: 1px solid #8e8e8e;
    box-shadow: inset 0 0 0 1px #fff;
    background: #e2e2e2;
  }
  .vscroll button { height: 17px; }
  .vscroll .thumb { flex: 520; margin-top: 1px; }
  .vscroll .rest { flex: 211; }
  .hrow { display: flex; height: 18px; background: #e1e1e1; }
  .hscroll { display: flex; flex: 1; background: #c4c4c4; }
  .hscroll button { width: 18px; }
  .hscroll .thumb { flex: 233; }
  .hscroll .rest { flex: 298; }
  .zoomfit { width: 32px; display: grid; place-items: center; }
  .combo.zoom { width: 156px; background: #fff; }
  .slider { width: 89px; padding: 1px 11px 0 12px; }
  .slider input {
    display: block;
    appearance: none;
    width: 100%;
    height: 12px;
    margin: 0;
    background: linear-gradient(#777, #777) 0 6px / 100% 1px no-repeat;
  }
  .slider input::-webkit-slider-thumb {
    appearance: none;
    width: 8px;
    height: 12px;
    border: 1px solid #888;
    background: #bdbdbd;
    clip-path: polygon(0 0, 100% 0, 100% 65%, 50% 100%, 0 65%);
  }
  .ticks { height: 3px; background: repeating-linear-gradient(90deg, #333 0 1px, transparent 1px 4px); }
  .corner { width: 18px; background: #fff; }

  .panes {
    --bg: #b3b3b3;
    display: flex;
    justify-content: flex-end;
    height: 29px;
    padding-top: 3px;
    border-top: 3px solid #1b2233;
    border-bottom: 1px solid #1b2233;
    background: #b3b3b3;
    box-shadow: inset 0 -1px #fff;
  }
  .panetabs { display: flex; gap: 2px; color: #5c5c5c; }
  .panetabs button {
    display: flex;
    align-items: center;
    gap: 5px;
    padding: 0 22px 2px 3px;
    border: 1px solid #777;
    border-bottom: 0;
    background: linear-gradient(#dadada, #c9c9c9);
    box-shadow: inset 1px 1px #eee;
  }
  .panetabs button:last-child { padding-left: 11px; }
  .panetabs button.active { color: #111; background: #f1f1f1; border-color: #f1f1f1; padding-right: 4px; padding-left: 2px; font-weight: 600; }
  .panetabs .active .label { padding-right: 4px; }
  .panebtns { width: 73px; justify-content: flex-end; padding: 0 5px 5px 0; }

  .side { position: relative; display: grid; grid-template-columns: minmax(0, 1fr) 23px; padding: 0 3px; background: #afafaf; }
  .frame { position: absolute; inset: 1px 0 0; border: 3px solid #5fc548; pointer-events: none; }
  .arrow { position: absolute; right: 178px; top: 388px; pointer-events: none; }
  .toolbox { position: relative; display: flex; flex-direction: column; min-height: 0; padding-bottom: 1px; border-right: 1px solid #2a3142; background: #f0f0f0; }
  .tooltitle { --bg: #afafaf; display: flex; justify-content: space-between; height: 22px; padding: 0 5px 0 3px; background: #afafaf; color: #fff; font-weight: 600; }
  .toolbtns { padding-bottom: 2px; }
  .options { height: 28px; padding: 3px 3px 0; border-top: 3px solid #f6f6f6; border-bottom: 1px solid #8f8f8f; background: linear-gradient(#fff, #f4f4f4 45%, #dcdcdc 55%, #e6e6e6); line-height: 20px; font-weight: 600; }
  .optbar { display: flex; align-items: flex-start; height: 27px; padding: 5px 5px 0; background: #e9e9e9; }
  .filter { width: 120px; height: 19px; margin-left: 7px; }
  .preview { margin-left: auto; }
  .sechead {
    display: flex;
    width: 100%;
    height: 24px;
    border-top: 3px solid #9a9a9a;
    border-bottom: 1px solid #6e6e6e;
    background: linear-gradient(#e8e8e8, #e0e0e0 50%, #d4d4d4 55%, #d8d8d8);
    text-align: left;
    font-weight: 600;
  }
  .chev { display: grid; place-items: center; width: 19px; height: 20px; padding-right: 2px; border-right: 1px solid #777; }
  .sectitle { padding-left: 4px; line-height: 20px; }
  .fill { flex: 1; min-height: 0; overflow: hidden; }
  .tiles {
    display: grid;
    grid-template-columns: repeat(auto-fill, 30px);
    grid-auto-rows: 30px;
    gap: 15px 20px;
    min-height: 150px;
    padding: 4px 0 0 11px;
    align-content: start;
  }
  .activate { position: absolute; left: 18px; bottom: 20px; display: grid; pointer-events: none; color: rgb(130 130 130 / 0.5); font: 400 14px/20px "Open Sans", sans-serif; white-space: nowrap; }
  .activate .big { font-size: 19px; line-height: 24px; }

  .sidetabs { display: flex; flex-direction: column; gap: 2px; padding-top: 28px; align-items: flex-start; color: #5c5c5c; }
  .sidetabs button {
    display: flex;
    flex-direction: column;
    align-items: center;
    gap: 6px;
    width: 21px;
    padding: 2px 0 19px;
    border: 1px solid #777;
    border-left: 0;
    background: linear-gradient(90deg, #dedede, #cfcfcf 50%, #dcdcdc);
    font-weight: 700;
    line-height: 18px;
  }
  .sidetabs button.active { background: #f0f0f0; color: #111; }
  .sidetabs span { writing-mode: vertical-rl; }
</style>
